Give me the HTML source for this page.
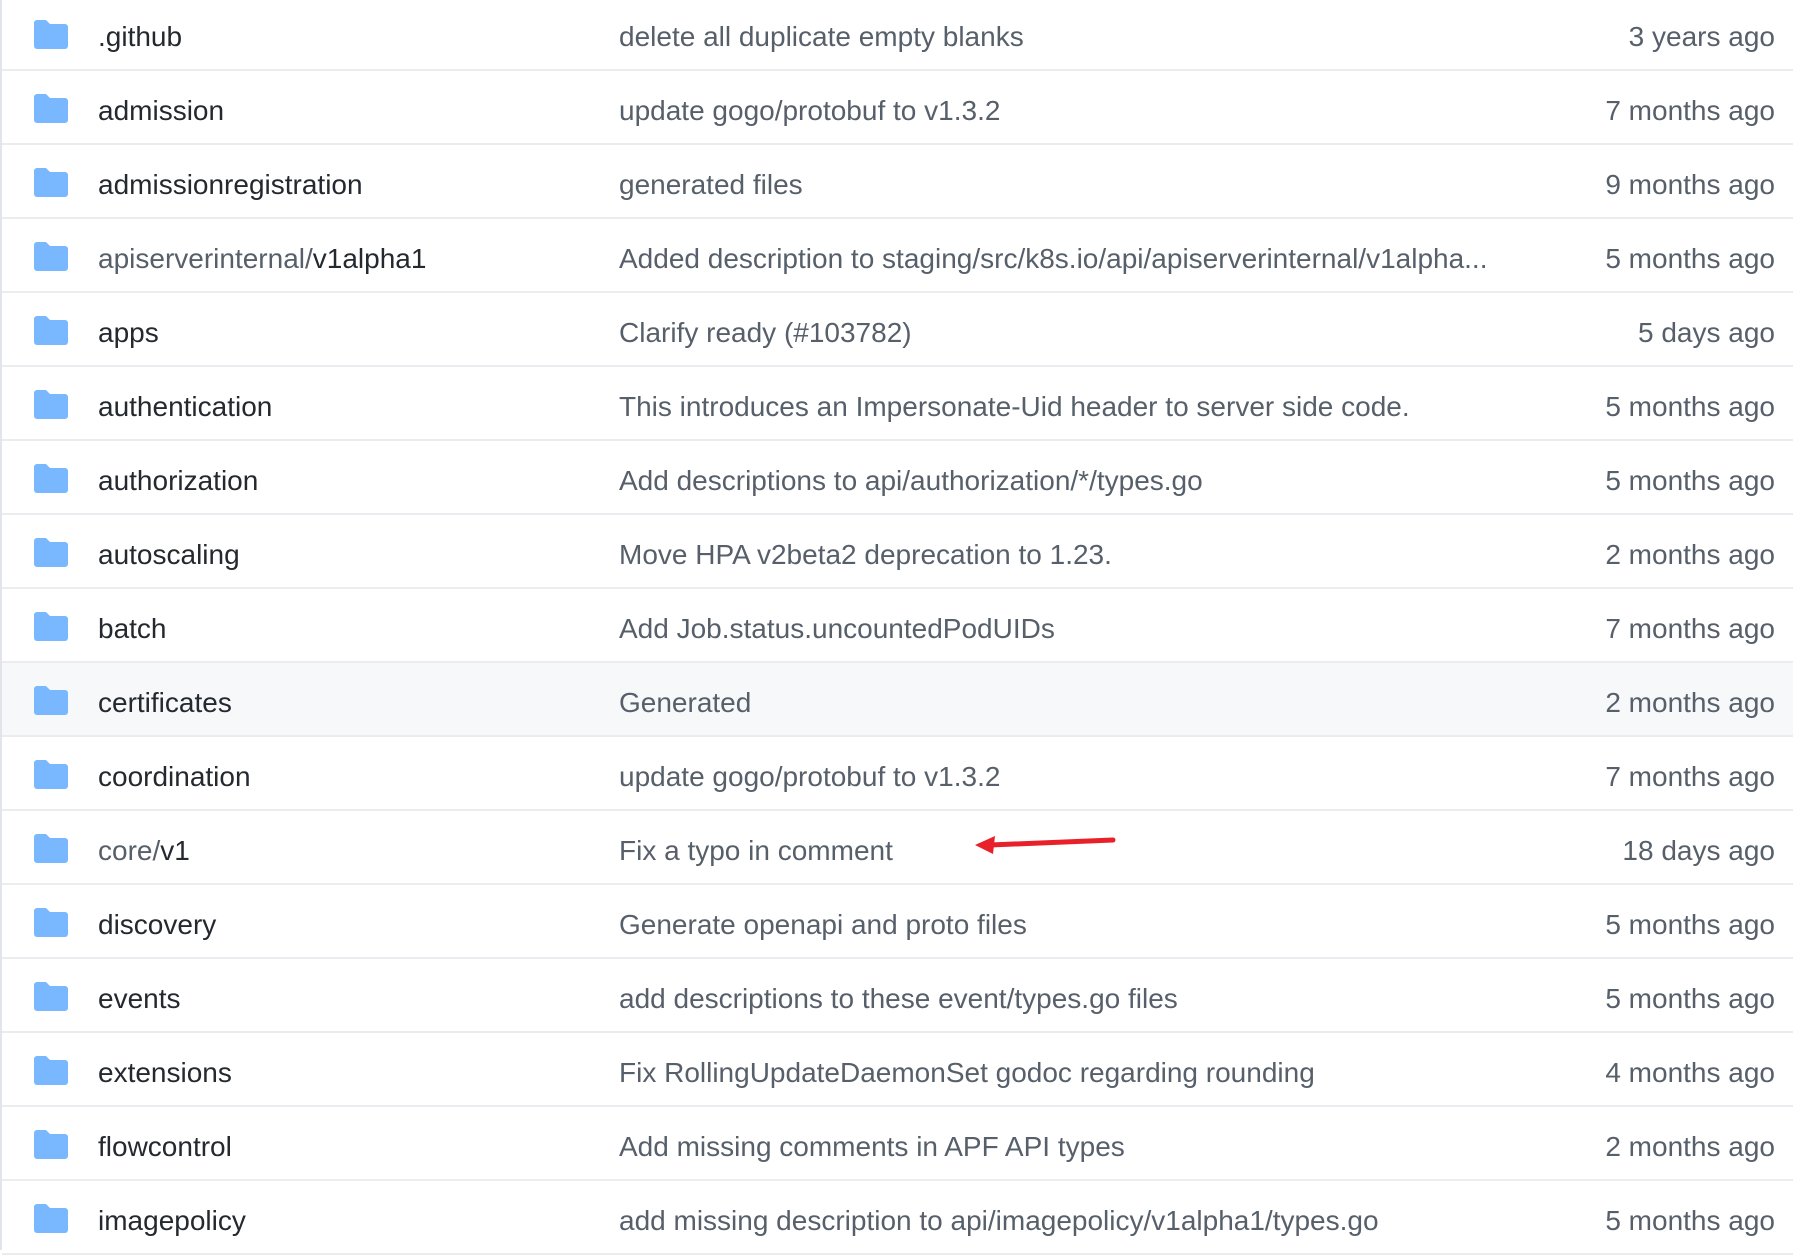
<!DOCTYPE html>
<html><head><meta charset="utf-8"><style>
body{margin:0;width:1793px;height:1250px;overflow:hidden;background:#fff;font-family:"Liberation Sans",sans-serif;position:relative}
.l{position:absolute;left:0;top:0;width:2px;height:1250px;background:#e1e4e8}
.r{position:absolute;left:2px;width:1791px;height:72px;border-bottom:2px solid #eaecef}
.r.h{background:#f6f8fa}
.i{position:absolute;left:32px;top:23px;width:34px;height:29px}
.n{position:absolute;left:96px;top:24px;font-size:28px;color:#24292f;white-space:nowrap}
.n span{color:#57606a}
.m{position:absolute;left:617px;top:24px;font-size:28px;color:#57606a;white-space:nowrap}
.a{position:absolute;right:18px;top:24px;font-size:28px;color:#57606a;white-space:nowrap}
</style></head><body>
<div class="l"></div>
<div id="c"></div>
<svg style="position:absolute;left:0;top:0" width="1793" height="1250"><path d="M1113 840 L990 845" stroke="#e8202a" stroke-width="5" stroke-linecap="round"/><path d="M975 845 L995 836 L993 854 Z" fill="#e8202a"/></svg>
<script>
var d=[[".github","delete all duplicate empty blanks","3 years ago"],["admission","update gogo/protobuf to v1.3.2","7 months ago"],["admissionregistration","generated files","9 months ago"],["<span>apiserverinternal/</span>v1alpha1","Added description to staging/src/k8s.io/api/apiserverinternal/v1alpha...","5 months ago"],["apps","Clarify ready (#103782)","5 days ago"],["authentication","This introduces an Impersonate-Uid header to server side code.","5 months ago"],["authorization","Add descriptions to api/authorization/*/types.go","5 months ago"],["autoscaling","Move HPA v2beta2 deprecation to 1.23.","2 months ago"],["batch","Add Job.status.uncountedPodUIDs","7 months ago"],["certificates","Generated","2 months ago"],["coordination","update gogo/protobuf to v1.3.2","7 months ago"],["<span>core/</span>v1","Fix a typo in comment","18 days ago"],["discovery","Generate openapi and proto files","5 months ago"],["events","add descriptions to these event/types.go files","5 months ago"],["extensions","Fix RollingUpdateDaemonSet godoc regarding rounding","4 months ago"],["flowcontrol","Add missing comments in APF API types","2 months ago"],["imagepolicy","add missing description to api/imagepolicy/v1alpha1/types.go","5 months ago"]];
var h="";var ic='<svg class="i" viewBox="0 0 34 29"><path d="M3 0h9l4 4h15a3 3 0 0 1 3 3v19a3 3 0 0 1-3 3H3a3 3 0 0 1-3-3V3a3 3 0 0 1 3-3z" fill="#79b8ff"/></svg>';
d.forEach(function(r,i){h+='<div class="r'+(i==9?' h':'')+'" style="top:'+(-3+74*i)+'px">'+ic+'<div class="n">'+r[0]+'</div><div class="m">'+r[1]+'</div><div class="a">'+r[2]+'</div></div>';});
document.getElementById("c").innerHTML=h;
</script>
</body></html>
